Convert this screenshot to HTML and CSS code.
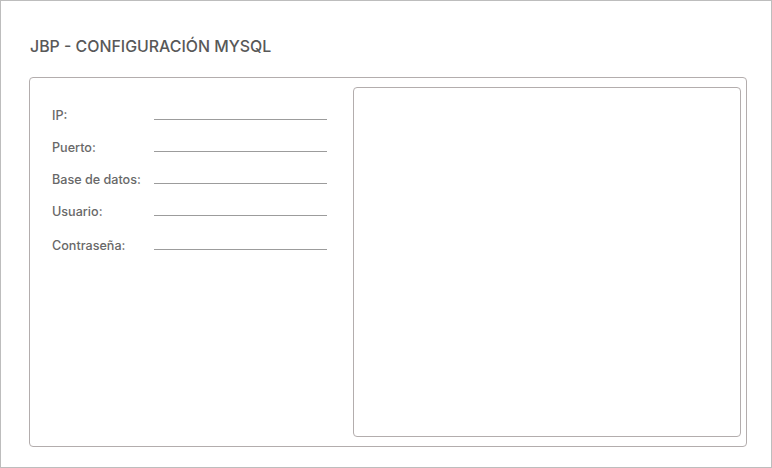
FILE: index.html
```html
<!DOCTYPE html>
<html lang="es">
<head>
<meta charset="utf-8">
<title>JBP - Configuración MySQL</title>
<link rel="stylesheet" href="styles.css">
</head>
<body>
<div class="window">
  <h1 class="title">JBP - CONFIGURACIÓN MYSQL</h1>
  <div class="card">
    <div class="form">
      <div class="row"><span class="label">IP:</span><div class="field"></div></div>
      <div class="row"><span class="label">Puerto:</span><div class="field"></div></div>
      <div class="row"><span class="label">Base de datos:</span><div class="field"></div></div>
      <div class="row"><span class="label">Usuario:</span><div class="field"></div></div>
      <div class="row row-last"><span class="label">Contraseña:</span><div class="field"></div></div>
    </div>
    <div class="panel"></div>
  </div>
</div>
</body>
</html>
```
FILE: styles.css
```css
html, body {
  margin: 0;
  padding: 0;
  background: #ffffff;
}
body {
  font-family: Inter, "Liberation Sans", sans-serif;
}
.window {
  box-sizing: border-box;
  width: 772px;
  height: 468px;
  border: 1px solid #bdbdbd;
  padding: 37px 24px 20px 28px;
  display: flex;
  flex-direction: column;
}
.title {
  margin: 0 0 21px 1px;
  font-size: 15.9px;
  font-weight: 500;
  line-height: 18px;
  color: #585858;
  letter-spacing: 0;
}
.card {
  flex: 1;
  border: 1px solid #b3adad;
  border-radius: 4px;
  display: flex;
  padding: 9px 5px 9px 0;
}
.form {
  flex: none;
  box-sizing: border-box;
  width: 323px;
  padding: 21px 0 0 22px;
  display: flex;
  flex-direction: column;
  gap: 17px;
}
.row {
  display: grid;
  grid-template-columns: 102px 173px;
  align-items: baseline;
}
.row-last {
  margin-top: 2px;
}
.label {
  font-size: 12.6px;
  font-weight: 500;
  line-height: 15px;
  color: #686868;
  white-space: nowrap;
}
.field {
  height: 0;
  border-bottom: 1px solid #9c9c9c;
}
.panel {
  flex: 1;
  border: 1px solid #b3adad;
  border-radius: 4px;
}
```
